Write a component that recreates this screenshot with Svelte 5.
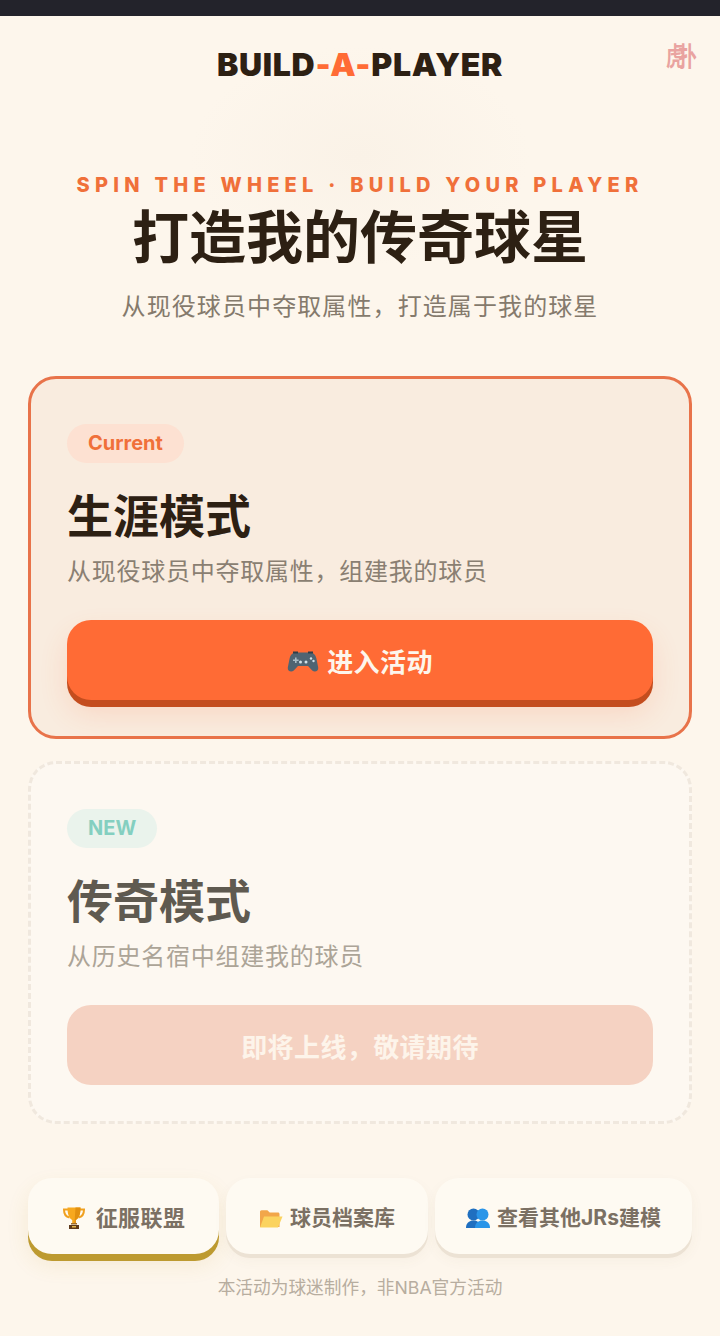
<script>
  const links = [
    { label: '征服联盟', icon: 'trophy', active: true },
    { label: '球员档案库', icon: 'folder', active: false },
    { label: '查看其他JRs建模', icon: 'people', active: false }
  ];
</script>

<div class="page">
  <div class="topbar"></div>
  <main class="content">
    <header class="logo-row">
      <div class="logo">BUILD<span class="dash">-</span><span class="a">A</span><span class="dash">-</span>PLAYER</div>
      <div class="brand">虎扑</div>
    </header>

    <section class="hero">
      <div class="eyebrow">SPIN THE WHEEL · BUILD YOUR PLAYER</div>
      <h1>打造我的传奇球星</h1>
      <p>从现役球员中夺取属性，打造属于我的球星</p>
    </section>

    <section class="card current">
      <span class="badge orange">Current</span>
      <h2>生涯模式</h2>
      <p class="desc">从现役球员中夺取属性，组建我的球员</p>
      <button class="cta">
        <svg class="pad" viewBox="0 0 32 24" aria-hidden="true">
          <path fill="#4f6472" d="M9 2.500h14c3.500 0 5.600 2.400 6.400 6l1.800 9c.6 3.400-3.400 5.400-6 3L21 16H11l-4.200 4.500c-2.600 2.400-6.600.4-6-3l1.800-9c.8-3.600 2.900-6 6.400-6z"/>
          <path fill="#2f3e48" d="M6 1.500h5v2H6zM21 1.500h5v2h-5z"/>
          <path fill="#a9bcc6" d="M8 7.500h1.600V9.500h2v1.600h-2v2H8v-2H6V9.500h2z"/>
          <circle cx="13.500" cy="12" r="1.500" fill="#cfe0e8"/><circle cx="19" cy="12" r="1.500" fill="#cfe0e8"/>
          <circle cx="24" cy="8.500" r="1.200" fill="#cfe0e8"/><circle cx="26.500" cy="11" r="1.200" fill="#cfe0e8"/>
        </svg>
        <span>进入活动</span>
      </button>
    </section>

    <section class="card upcoming">
      <span class="badge teal">NEW</span>
      <h2>传奇模式</h2>
      <p class="desc">从历史名宿中组建我的球员</p>
      <button class="cta off" disabled>即将上线，敬请期待</button>
    </section>

    <nav class="links">
      {#each links as link}
        <button class="link" class:active={link.active}>
          {#if link.icon === 'trophy'}
            <svg class="trophy" viewBox="0 0 24 24" aria-hidden="true">
              <path fill="none" stroke="#f0a020" stroke-width="2" d="M6 3.500H2c0 4.500 2 7.500 5.500 8M18 3.500h4c0 4.500-2 7.500-5.500 8"/>
              <path fill="#f7a81e" d="M5.500 1.500h13c0 7-1.500 10.500-4.700 12.500v3h-3.600v-3C7 12 5.500 8.500 5.500 1.500z"/>
              <path fill="#e2900f" d="M13.500 1.500h5c0 7-1.500 10.500-4.700 12.500v3H12.500z"/>
              <path fill="#a5702a" d="M9 17h6v1.500H9z"/>
              <path fill="#5f3a1c" d="M7 19h10v4H7z"/>
              <path fill="#e8b84a" d="M10 20h4v1.500h-4z"/>
            </svg>
          {:else if link.icon === 'folder'}
            <svg viewBox="0 0 24 24" aria-hidden="true">
              <path fill="#f2a64a" d="M1 21V6c0-1 .6-1.700 1.600-1.700h5.800l2.300 2.300h8.200c1 0 1.600.7 1.600 1.600V21z"/>
              <path fill="#fbd35f" d="M1 21.500 5 10.500h18.500L19 21.500z"/>
            </svg>
          {:else}
            <svg viewBox="0 0 24 24" aria-hidden="true">
              <circle cx="7.500" cy="8.500" r="6" fill="#1f6fc0"/>
              <path fill="#1f6fc0" d="M0 22c0-5 3-6.500 5.500-7.500h4c2.500 1 5 2.500 5 7.500z"/>
              <circle cx="16.500" cy="8.500" r="6" fill="#2a95e8"/>
              <path fill="#2a95e8" d="M9 22c0-5 3-6.500 5.500-7.500h4c2.500 1 5.500 2.500 5.500 7.500z"/>
            </svg>
          {/if}
          <span>{link.label}</span>
        </button>
      {/each}
    </nav>

    <footer>本活动为球迷制作，非NBA官方活动</footer>
  </main>
</div>

<style>
  :global(body) {
    margin: 0;
    background: #fdf6ec;
  }
  .page {
    height: 1336px;
    overflow: hidden;
    font-family: Inter, "Noto Sans CJK SC", sans-serif;
    color: #2d2013;
    background: #fdf6ec;
  }
  .topbar {
    height: 16px;
    background: #23232b;
  }
  .content {
    padding: 0 28px;
    background: radial-gradient(ellipse 170px 110px at 360px 140px, #faf2e7 0%, #fdf6ec 100%);
  }
  .logo-row {
    position: relative;
    height: 84px;
    padding-top: 29px;
    box-sizing: border-box;
    display: flex;
    justify-content: center;
  }
  .logo {
    font-weight: 900;
    font-size: 32px;
    line-height: 40px;
    letter-spacing: .7px;
    color: #2d2013;
  }
  .logo .dash, .logo .a { color: #ff6b35; }
  .brand {
    position: absolute;
    right: -11px;
    top: 25px;
    font-size: 26px;
    line-height: 32px;
    font-weight: 700;
    color: #e9a3a0;
    letter-spacing: -9px;
    padding-right: 9px;
    transform: scaleX(.72);
  }
  .hero {
    padding-top: 73px;
    text-align: center;
  }
  .eyebrow {
    font-weight: 800;
    font-size: 20px;
    line-height: 24px;
    letter-spacing: 5.250px;
    color: #f0703a;
  }
  h1 {
    margin: 3px 0 0;
    font-size: 57px;
    line-height: 76px;
    font-weight: 700;
    color: #2d2013;
  }
  .hero p {
    margin: 15px 0 0;
    font-size: 24px;
    line-height: 32px;
    letter-spacing: 1.100px;
    color: #857a6c;
  }
  .card {
    box-sizing: border-box;
    height: 363px;
    border-radius: 28px;
    padding: 45px 36px 0;
    border: 3px solid #e8734a;
    background: #f9ecdf;
  }
  .current {
    margin-top: 53px;
  }
  .upcoming {
    margin-top: 22px;
    border: 3px dashed #f0e8de;
    background: #fdf8f1;
  }
  .badge {
    display: block;
    width: fit-content;
    height: 39px;
    box-sizing: border-box;
    padding: 0 21px;
    border-radius: 20px;
    font-weight: 700;
    font-size: 20px;
    line-height: 39px;
  }
  .orange { background: #fde1d2; color: #f0703a; }
  .teal { background: #eaf3ec; color: #84cfc0; }
  h2 {
    margin: 22px 0 0;
    font-size: 46px;
    line-height: 62px;
    font-weight: 700;
    color: #2d2013;
  }
  .upcoming h2 { color: #5f5a50; }
  .desc {
    margin: 9px 0 0;
    font-size: 24px;
    line-height: 32px;
    letter-spacing: .75px;
    color: #8a7f72;
  }
  .upcoming .desc { color: #aca497; }
  .cta {
    display: flex;
    align-items: center;
    justify-content: center;
    gap: 8px;
    width: 100%;
    height: 80px;
    margin-top: 32px;
    border: 0;
    border-radius: 24px;
    background: #ff6b35;
    color: #fdf6ec;
    font-family: inherit;
    font-size: 26px;
    font-weight: 700;
    letter-spacing: .4px;
    box-shadow: 0 7px 0 #c44d1e, 0 14px 28px rgba(255, 107, 53, .16);
  }
  .cta.off {
    background: #f5d2c2;
    color: #fdf4ea;
    box-shadow: none;
  }
  .pad { width: 32px; height: 24px; margin-top: 4px; }
  .links {
    display: grid;
    grid-template-columns: 191fr 202fr 257fr;
    gap: 7px;
    margin-top: 54px;
  }
  .link {
    height: 76px;
    display: flex;
    align-items: center;
    justify-content: center;
    gap: 7px;
    padding: 0;
    border: 0;
    border-radius: 24px;
    background: #fefaf2;
    color: #7b7063;
    font-family: inherit;
    font-weight: 700;
    font-size: 21px;
    box-shadow: 0 4px 0 #ece2d4, 0 6px 14px rgba(120, 90, 50, .05);
  }
  .link.active {
    font-size: 22px;
    letter-spacing: .4px;
    box-shadow: 0 7px 0 #bd9a30, 0 10px 22px rgba(190, 150, 40, .12);
  }
  .link svg { width: 24px; height: 24px; flex: none; margin-top: 3px; }
  .link svg.trophy { margin-right: 3px; }
  footer {
    margin-top: 22px;
    text-align: center;
    font-size: 17.700px;
    line-height: 24px;
    color: #b7ad9f;
  }
</style>
